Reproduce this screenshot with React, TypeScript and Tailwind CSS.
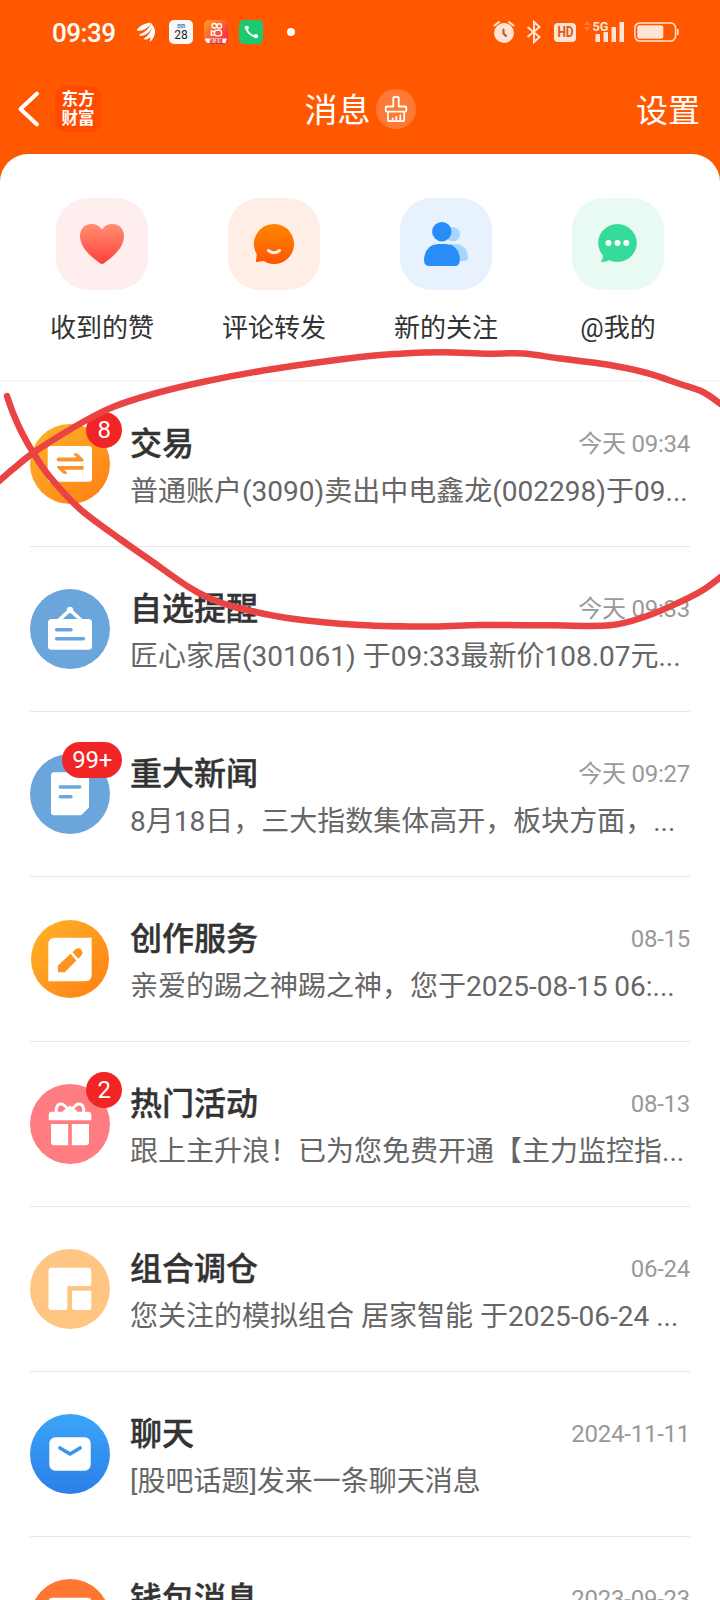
import type { ReactNode } from "react"

type Message = {
  id: string
  title: string
  time: string
  text: string
  badge?: string
  icon: ReactNode
}

function Gradient({ id, from, to, diagonal }: { id: string; from: string; to: string; diagonal?: boolean }) {
  return (
    <defs>
      <linearGradient id={id} x1="0" y1="0" x2={diagonal ? "1" : "0"} y2="1">
        <stop offset="0" stopColor={from} />
        <stop offset="1" stopColor={to} />
      </linearGradient>
    </defs>
  )
}

function RoundIcon({ fill, r = 40, children }: { fill: string; r?: number; children: ReactNode }) {
  return (
    <svg viewBox="0 0 80 80" className="size-20">
      <circle cx="40" cy="40" r={r} fill={fill} />
      {children}
    </svg>
  )
}

const messages: Message[] = [
  {
    id: "trade",
    title: "交易",
    time: "今天 09:34",
    text: "普通账户(3090)卖出中电鑫龙(002298)于09...",
    badge: "8",
    icon: (
      <RoundIcon fill="url(#trade)">
        <Gradient id="trade" from="#feb52b" to="#ff7d12" diagonal />
        <rect x="17.7" y="22" width="44.3" height="35.7" rx="3" fill="#fff" />
        <path d="M28.5 33.6H46.5L43.8 30.8Q43.5 29 45.5 29.2Q48 29.5 49 31L53.6 35.6Q54.3 37.4 52.5 37.4H28.5Q26.7 37.2 26.7 35.5Q26.7 33.8 28.5 33.6Z" fill="#f6962a" />
        <path d="M52.2 45.7H34.2L37 48.5Q37.300 50.300 35.300 50.100Q32.800 49.800 31.800 48.300L27.200 43.700Q26.500 41.900 28.300 41.900H52.200Q54 42.100 54 43.800Q54 45.500 52.200 45.700Z" fill="#f6962a" />
      </RoundIcon>
    ),
  },
  {
    id: "watch",
    title: "自选提醒",
    time: "今天 09:33",
    text: "匠心家居(301061) 于09:33最新价108.07元...",
    icon: (
      <RoundIcon fill="#6aa6dc">
        <path d="M28.500 31.500L40 21L51.500 31.500" fill="none" stroke="#fff" strokeWidth="3.600" />
        <circle cx="40" cy="21" r="3.200" fill="#fff" />
        <rect x="18" y="30" width="44" height="30.7" rx="3.5" fill="#fff" />
        <path d="M26.5 40.8H41M26.5 49.7H53.5" stroke="#6aa6dc" strokeWidth="3.4" strokeLinecap="round" />
      </RoundIcon>
    ),
  },
  {
    id: "news",
    title: "重大新闻",
    time: "今天 09:27",
    text: "8月18日，三大指数集体高开，板块方面，...",
    badge: "99+",
    icon: (
      <RoundIcon fill="#6aa6dc">
        <path d="M24 18.3H56Q59 18.3 59 21.3V52.5Q59 53.5 58.2 54.3L52 60.5Q51.2 61.3 50.2 61.3H24Q21 61.3 21 58.3V21.3Q21 18.3 24 18.3Z" fill="#fff" />
        <path d="M30.3 33H49.8M30.3 42.7H41" stroke="#6aa6dc" strokeWidth="3.4" strokeLinecap="round" />
      </RoundIcon>
    ),
  },
  {
    id: "create",
    title: "创作服务",
    time: "08-15",
    text: "亲爱的踢之神踢之神，您于2025-08-15 06:...",
    icon: (
      <RoundIcon fill="url(#create)" r={39}>
        <Gradient id="create" from="#feb52b" to="#ff7d12" diagonal />
        <path d="M25 18.7H61.7V55.5Q61.7 62.3 55 62.3H18.3V25.5Q18.3 18.7 25 18.7Z" fill="#fff" />
        <path d="M28 53.3V46.6L40.6 34.8L46.4 41.6L34.8 53.3Z" fill="#fe9420" />
        <path d="M42.500 33.200L45.500 30.300Q48.800 28.200 51.300 30.800Q53.500 33.600 51.500 36.300L48.300 39.800Z" fill="#fe9420" />
      </RoundIcon>
    ),
  },
  {
    id: "hot",
    title: "热门活动",
    time: "08-13",
    text: "跟上主升浪！已为您免费开通【主力监控指...",
    badge: "2",
    icon: (
      <RoundIcon fill="#ff7c80">
        <path d="M40 29C36.500 22.500 33.500 20 31 20C27.500 20 25.800 23 26.300 28.500M40 29C43.500 22.500 46.500 20 49 20C52.500 20 54.200 23 53.700 28.500M33.500 28.500L40 23.500L46.500 28.500" fill="none" stroke="#fff" strokeWidth="3" />
        <path d="M22 27.700H58Q61.300 27.700 61.300 31V36.300H18.700V31Q18.700 27.700 22 27.700Z" fill="#fff" />
        <path d="M21 40H38.200V61.300H24Q21 61.300 21 58.300ZM41.800 40H59V58.300Q59 61.300 56 61.300H41.800Z" fill="#fff" />
      </RoundIcon>
    ),
  },
  {
    id: "portfolio",
    title: "组合调仓",
    time: "06-24",
    text: "您关注的模拟组合 居家智能 于2025-06-24 ...",
    icon: (
      <RoundIcon fill="#fec682">
        <path d="M21.500 18.700H58.300Q61.300 18.700 61.300 21.700V34.500Q61.300 37 58.800 37H38.300Q37.300 37 37.300 38V58.500Q37.300 61 34.800 61H21.500Q18.500 61 18.500 58V21.700Q18.500 18.700 21.500 18.700Z" fill="#fff" />
        <path d="M42 41.700H61.300V58.500Q61.300 61 58.800 61H44.500Q42 61 42 58.500Z" fill="#fff" />
      </RoundIcon>
    ),
  },
  {
    id: "chat",
    title: "聊天",
    time: "2024-11-11",
    text: "[股吧话题]发来一条聊天消息",
    icon: (
      <RoundIcon fill="url(#chat)">
        <Gradient id="chat" from="#3ba5f7" to="#2b7fea" />
        <rect x="19.3" y="23.3" width="41.400" height="33.400" rx="6" fill="#fff" />
        <path d="M30 34L40 40L50 34" fill="none" stroke="#3494f1" strokeWidth="3.6" strokeLinecap="round" strokeLinejoin="round" />
      </RoundIcon>
    ),
  },
  {
    id: "wallet",
    title: "钱包消息",
    time: "2023-09-23",
    text: "",
    icon: (
      <RoundIcon fill="#ff7733">
        <rect x="18.500" y="18.800" width="43" height="40" rx="4" fill="#fff" />
      </RoundIcon>
    ),
  },
]

const shortcuts = [
  {
    label: "收到的赞",
    tile: "bg-[#ffeeee]",
    icon: (
      <svg viewBox="0 0 92 92" className="size-[92px]">
        <Gradient id="heart" from="#ff8f70" to="#ff3f3f" />
        <path d="M46 31.500C42 26 37.500 26 35 26C28.500 26 24 31 24 38C24 49 34 58 44 65.300Q46 66.500 48 65.300C58 58 68 49 68 38C68 31 63.500 26 57 26C54.500 26 50 26 46 31.500Z" fill="url(#heart)" />
      </svg>
    ),
  },
  {
    label: "评论转发",
    tile: "bg-[#ffeee5]",
    icon: (
      <svg viewBox="0 0 92 92" className="size-[92px]">
        <Gradient id="comment" from="#ff8500" to="#ff5600" />
        <path d="M46 26A20 20 0 1 1 35.500 63L29 64Q27.600 64 28 62.500L28.800 56.200A20 20 0 0 1 46 26Z" fill="url(#comment)" />
        <path d="M40.500 52.500Q46 57 51.500 52.500" fill="none" stroke="#ffeee5" strokeWidth="3" strokeLinecap="round" />
      </svg>
    ),
  },
  {
    label: "新的关注",
    tile: "bg-[#e7f2fe]",
    icon: (
      <svg viewBox="0 0 92 92" className="size-[92px]">
        <circle cx="53" cy="36.300" r="7" fill="#a7d5fd" />
        <path d="M50 46H57Q68 48 68 60Q67.500 62.800 64 63H50Z" fill="#a7d5fd" />
        <circle cx="41.800" cy="33.700" r="9.700" fill="#288df9" />
        <path d="M38 46H46Q59.800 47 59.800 62Q59.800 68 54.500 68H29.500Q24 68 24 62Q24.500 47 38 46Z" fill="#288df9" />
      </svg>
    ),
  },
  {
    label: "@我的",
    tile: "bg-[#e8faf2]",
    icon: (
      <svg viewBox="0 0 92 92" className="size-[92px]">
        <path d="M45.500 26A19.500 19 0 1 1 37 62.200Q33.500 64.200 29.500 63.900Q28.700 63.500 29.600 62.500Q31.300 60.500 30.800 57.300A19.500 19 0 0 1 45.500 26Z" fill="#35db99" />
        <g fill="#fff">
          <circle cx="36.500" cy="45" r="3" />
          <circle cx="45.500" cy="45" r="3" />
          <circle cx="54.300" cy="45" r="3" />
        </g>
      </svg>
    ),
  },
]

const strokeA: number[][] = [
  [7, 396], [13, 413], [21.5, 432], [32.500, 451.500], [50, 477], [80, 509], [120, 539], [150, 560],
  [187, 586], [207, 597], [233, 606.500], [287, 618], [360, 625], [433, 626.500], [480, 625], [550, 625.300],
  [610, 625.300], [647, 616], [680, 602], [703, 590], [722, 576],
]
const strokeB: number[][] = [
  [-3, 483], [13, 469], [33, 453], [57, 437.500], [83, 422], [113, 407], [153, 394], [205, 381.500], [273, 369],
  [360, 357], [400, 353.700], [443, 352.300], [487, 353.700], [523, 353.500], [560, 358.500], [607, 364.500],
  [647, 373], [680, 384], [703, 392], [722, 405],
]

// Catmull-Rom through the points, written as cubic beziers
function smooth(points: number[][]) {
  let d = `M${points[0][0]} ${points[0][1]}`
  for (let i = 0; i < points.length - 1; i++) {
    const p0 = points[i - 1] || points[i]
    const p1 = points[i]
    const p2 = points[i + 1]
    const p3 = points[i + 2] || p2
    d += `C${p1[0] + (p2[0] - p0[0]) / 6} ${p1[1] + (p2[1] - p0[1]) / 6} ${p2[0] - (p3[0] - p1[0]) / 6} ${p2[1] - (p3[1] - p1[1]) / 6} ${p2[0]} ${p2[1]}`
  }
  return d
}

function StatusBar() {
  return (
    <div className="flex h-16 items-center pr-[41px] pl-[52px]">
      <span className="w-[65px] pt-[2px] text-[26px] leading-none font-medium tracking-[-0.5px]">09:39</span>
      <svg viewBox="0 0 18 20" className="ml-[20px] h-5 w-[18px]" fill="#fff">
        <path d="M0 7.500Q4 2 13.500 0.500Q14 3.500 9 6.500Q5 9 0.500 9ZM2 12.800Q11.500 9 14.300 1Q17 4 13 9Q9 13.500 3.500 14ZM6.500 17Q14.800 11 15.500 3Q19.500 8 17.500 13Q16 18 12.500 20Q14.500 14 12 16Q9.500 18.500 6.500 17Z" />
      </svg>
      <div className="ml-[14px] flex size-6 flex-col items-center rounded-[5px] bg-[#f8f8fa] pt-1 text-[#222]">
        <span className="flex h-[5px] items-center text-[4px] leading-none font-bold text-[#2378b5]">周四</span>
        <span className="text-[12px] leading-[13px]">28</span>
      </div>
      <svg viewBox="0 0 24 24" className="ml-[11px] size-6">
        <Gradient id="video" from="#ffa022" to="#fc1548" diagonal />
        <rect width="24" height="24" rx="5" fill="url(#video)" />
        <g fill="none" stroke="#fff" strokeWidth="1.400">
          <circle cx="10.300" cy="5.800" r="2.300" />
          <circle cx="15.300" cy="6" r="2.300" />
          <rect x="10.500" y="10.300" width="7" height="5.600" rx="1.800" />
          <path d="M10.500 12L7.300 11V15.300L10.500 14.300" />
        </g>
        <path d="M1 18.500H23L21.500 23H4Q1 21.500 1 18.500Z" fill="#fff" />
        <text x="5.500" y="22.600" fontSize="4.500" fontWeight="700" fill="#d3271c">极速版</text>
      </svg>
      <svg viewBox="0 0 24 24" className="ml-[11px] size-6">
        <rect width="24" height="24" rx="5" fill="#1bca70" />
        <path d="M7.500 8.500Q9 14.500 16 16.500" fill="none" stroke="#fff" strokeWidth="1.900" />
        <circle cx="7.800" cy="7.800" r="2.100" fill="#fff" />
        <circle cx="17" cy="16.200" r="2.100" fill="#fff" />
      </svg>
      <span className="ml-6 size-2 rounded-full bg-white" />

      <svg viewBox="0 0 22 24" className="ml-auto h-6 w-[22px]">
        <circle cx="11" cy="13" r="10" fill="#ffe3d5" />
        <path d="M1.500 5.500L6 2M20.500 5.500L16 2" stroke="#ffe3d5" strokeWidth="2" strokeLinecap="round" />
        <path d="M10.500 9.500V13.500L13 16" fill="none" stroke="#c4571b" strokeWidth="2" strokeLinecap="round" />
      </svg>
      <svg viewBox="0 0 16 24" className="ml-[11px] h-6 w-4">
        <path d="M1.500 7L13.500 17L8 22V2L13.500 7L1.500 17" fill="none" stroke="#ffe3d5" strokeWidth="2" />
      </svg>
      <div className="ml-[12px] flex h-[19px] w-[22px] items-center justify-center rounded-[4px] bg-[#ffe3d5]">
        <span className="scale-x-[0.85] text-[14px] leading-none font-bold text-[#d75a17]">HD</span>
      </div>
      <svg viewBox="0 0 40 24" className="ml-[8px] h-6 w-10 overflow-visible">
        <path d="M3 1L6.500 5H0ZM3 11L6.500 7H0Z" fill="#ff7a3c" />
        <path d="M11.500 14H16V22H11.500ZM19.500 12H24V22H19.500ZM27.500 7H32V22H27.500ZM35.500 2H40V22H35.500Z" fill="#ffe3d5" />
        <text x="8.500" y="11" fontSize="13.500" fontWeight="700" fill="#ffe3d5" stroke="#ff5800" strokeWidth="1.500" paintOrder="stroke" textLength="16" lengthAdjust="spacingAndGlyphs">5G</text>
      </svg>
      <svg viewBox="0 0 45 20" className="ml-[10px] h-5 w-[45px]">
        <rect x="0.900" y="0.900" width="40.700" height="18.200" rx="5" fill="none" stroke="#ffe3d5" strokeWidth="1.500" />
        <rect x="3.300" y="3.300" width="26" height="13.400" rx="2" fill="#ffe3d5" />
        <path d="M43.800 7V13" stroke="#ffe3d5" strokeWidth="1.700" />
      </svg>
    </div>
  )
}

function NavBar() {
  return (
    <div className="grid h-[90px] grid-cols-3 items-center">
      <div className="flex items-center pl-[17px]">
        <svg viewBox="0 0 24 38" className="h-[38px] w-6">
          <path d="M20 3.500L3.500 19L20 34.500" fill="none" stroke="#fff" strokeWidth="4" strokeLinecap="round" strokeLinejoin="round" />
        </svg>
        <div className="ml-[14px] flex size-[46px] items-center justify-center rounded-[10px] bg-[#ff4a00] text-center text-[16.5px] leading-[19px] font-bold">
          东方
          <br />
          财富
        </div>
      </div>
      <div className="flex items-center justify-center">
        <h1 className="pt-[3px] text-[33px] leading-none">消息</h1>
        <svg viewBox="0 0 40 40" className="ml-[5px] size-10">
          <circle cx="20" cy="20" r="20" fill="#ff7936" />
          <g fill="none" stroke="#fff" strokeWidth="1.800" strokeLinejoin="round" strokeLinecap="round">
            <path d="M17.300 17.500V9Q17.300 8 18.300 8H21.700Q22.700 8 22.700 9V17.500H29Q30.300 17.500 30.300 18.700V21.500Q30.300 22.700 29 22.700H11Q9.700 22.700 9.700 21.500V18.700Q9.700 17.500 11 17.500Z" />
            <path d="M12 23V30.500Q12 32.200 13.700 32.200H26.500Q28.200 32.200 28.200 30.500V23M16.700 29.500V32M20.300 28V32M24.300 26.500V32" />
          </g>
        </svg>
      </div>
      <button className="justify-self-end pt-[3px] pr-[20px] text-[32px] leading-none">设置</button>
    </div>
  )
}

function MessageRow({ message }: { message: Message }) {
  return (
    <li className="mx-[30px] flex h-[165px] shrink-0 border-b border-[#e8e8e8] pt-[42px]">
      <div className="relative size-20 shrink-0">
        {message.icon}
        {message.badge && (
          <span className="absolute -top-3 -right-3 flex h-9 min-w-9 items-center justify-center rounded-full bg-[#f12525] px-[10px] text-[24px] leading-none tracking-[-0.3px] text-white">
            {message.badge}
          </span>
        )}
      </div>
      <div className="ml-5 min-w-0 flex-1 pt-px">
        <div className="flex h-[38px] items-center justify-between">
          <h2 className="text-[32px] leading-[38px] font-medium text-[#333] [-webkit-text-stroke:0.4px_#333]">
            {message.title}
          </h2>
          <time className="text-[24px] leading-[38px] tracking-[-0.25px] text-[#999]">{message.time}</time>
        </div>
        <p className="mt-[10px] text-[28px] leading-[38px] whitespace-nowrap text-[#666]">{message.text}</p>
      </div>
    </li>
  )
}

export default function App() {
  return (
    <div className="relative flex h-[1600px] w-[720px] flex-col overflow-hidden bg-[#ff5800] font-['Roboto','Noto_Sans_CJK_SC',sans-serif]">
      <header className="text-white">
        <StatusBar />
        <NavBar />
      </header>

      <main className="flex min-h-0 flex-1 flex-col overflow-hidden rounded-t-[28px] bg-white">
        <nav className="flex h-[228px] shrink-0 border-b-2 border-[#f6f6f6] px-4 pt-11">
          {shortcuts.map((item) => (
            <div key={item.label} className="flex w-[172px] flex-col items-center">
              <div className={`size-[92px] rounded-[32px] ${item.tile}`}>{item.icon}</div>
              <span className="mt-5 text-[26px] leading-9 text-[#333]">{item.label}</span>
            </div>
          ))}
        </nav>
        <ul className="flex flex-col">
          {messages.map((message) => (
            <MessageRow key={message.id} message={message} />
          ))}
        </ul>
      </main>

      <svg viewBox="0 0 720 1600" className="pointer-events-none absolute inset-0 h-[1600px] w-[720px]">
        <g fill="none" stroke="#ea4343" strokeWidth="6.500" strokeLinecap="round" strokeLinejoin="round">
          <path d={smooth(strokeA)} />
          <path d={smooth(strokeB)} />
        </g>
      </svg>
    </div>
  )
}
